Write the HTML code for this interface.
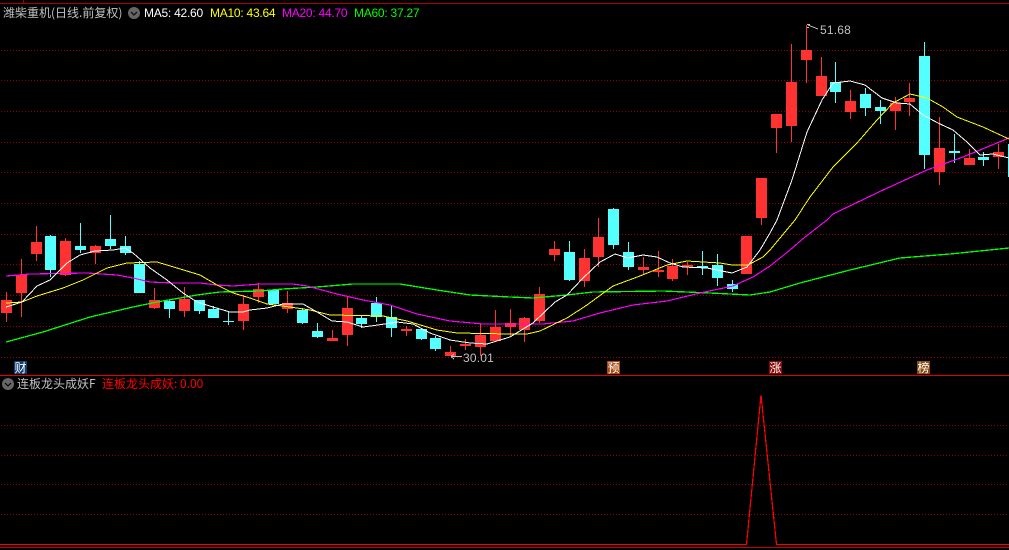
<!DOCTYPE html>
<html lang="zh-CN">
<head>
<meta charset="utf-8">
<title>潍柴重机</title>
<style>
html,body{margin:0;padding:0;background:#000;width:1009px;height:550px;overflow:hidden}
#w{position:relative;width:1009px;height:550px;background:#000;overflow:hidden}
svg{position:absolute;left:0;top:0}
.t{position:absolute;white-space:nowrap;font:12px/14px "WenQuanYi Zen Hei","Noto Sans CJK SC",sans-serif}
.l{position:absolute;white-space:nowrap;font:12px/14px "Liberation Sans",sans-serif;letter-spacing:-.25px}
.n{letter-spacing:.2px}
.m{position:absolute;width:13px;height:13px;top:361px;color:#fff;text-align:center;font:12px/13px "WenQuanYi Zen Hei","Noto Sans CJK SC",sans-serif}
</style>
</head>
<body>
<div id="w">
<svg width="1009" height="550" viewBox="0 0 1009 550" shape-rendering="crispEdges" fill="none">
<g stroke="#960000" stroke-width="1" stroke-dasharray="1 2">
<path d="M1 50.5H1009M1 80.5H1009M1 111.5H1009M1 142.5H1009M1 172.5H1009M1 203.5H1009M1 234.5H1009M1 264.5H1009M1 295.5H1009M1 326.5H1009M1 357.5H1009M1 425.5H1009M1 455.5H1009M1 484.5H1009M1 514.5H1009"/>
</g>
<path d="M0 3.5H1009M23.5 0V3" stroke="#a80000"/>
<path d="M0 375.5H1009" stroke="#e00000"/>
<path d="M0 547.5H1009" stroke="#c80000"/>
<path stroke="#ff3232" d="M6.5 292V322M21.5 259V317M36.5 226V261M65.5 238V276M95.5 245V264M154.5 288V309M184.5 287V317M243.5 295V330M258.5 283V303M287.5 291V313M332.5 330V341M347.5 296V346M406.5 326V336M450.5 346V356M465.5 339V350M480.5 323V356M495.5 310V341M510.5 309V337M524.5 317V342M539.5 287V323M554.5 241V261M584.5 249V287M598.5 218V267M643.5 257V274M658.5 251V277M672.5 259V281M687.5 262V275M746.5 236V274M761.5 178V225M776.5 114V153M791.5 44V142M806.5 25V83M821.5 57V96M850.5 90V119M895.5 97V130M909.5 83V116M939.5 117V185M969.5 149V165M998.5 144V169"/>
<path fill="#ff3232" d="M1 300h11v13h-11zM16 275h11v18h-11zM31 242h11v12h-11zM60 241h11v34h-11zM90 246h11v7h-11zM149 300h11v8h-11zM179 299h11v12h-11zM238 304h11v17h-11zM253 289h11v8h-11zM282 303h11v6h-11zM327 338h11v3h-11zM342 308h11v27h-11zM401 329h11v2h-11zM445 352h11v4h-11zM460 344h11v2h-11zM475 335h11v12h-11zM490 327h11v14h-11zM505 323h11v4h-11zM519 318h11v12h-11zM534 294h11v27h-11zM549 249h11v6h-11zM579 258h11v23h-11zM593 237h11v20h-11zM638 267h11v3h-11zM653 270h11v2h-11zM667 266h11v13h-11zM682 265h11v2h-11zM741 236h11v38h-11zM756 178h11v40h-11zM771 114h11v14h-11zM786 82h11v44h-11zM801 50h11v10h-11zM816 76h11v20h-11zM845 101h11v11h-11zM890 103h11v8h-11zM904 98h11v4h-11zM934 148h11v24h-11zM964 158h11v7h-11zM993 152h11v5h-11z"/>
<path stroke="#54ffff" d="M50.5 235V277M80.5 223V253M110.5 215V249M125.5 236V255M139.5 261V293M169.5 300V318M199.5 300V314M213.5 306V318M228.5 312V325M273.5 290V304M302.5 308V324M317.5 323V338M361.5 316V328M376.5 297V322M391.5 305V337M421.5 328V340M435.5 336V351M569.5 241V281M613.5 208V249M628.5 242V270M702.5 251V275M717.5 254V286M732.5 280V292M835.5 62V103M865.5 88V116M880.5 100V124M924.5 42V169M954.5 134V163M983.5 152V166"/>
<path fill="#54ffff" d="M45 236h11v34h-11zM75 246h11v4h-11zM105 239h11v7h-11zM120 246h11v7h-11zM134 264h11v29h-11zM164 301h11v8h-11zM194 300h11v11h-11zM208 309h11v9h-11zM223 321h11v1h-11zM268 290h11v14h-11zM297 310h11v13h-11zM312 331h11v6h-11zM356 318h11v6h-11zM371 303h11v14h-11zM386 317h11v11h-11zM416 329h11v10h-11zM430 338h11v11h-11zM564 252h11v28h-11zM608 209h11v36h-11zM623 252h11v15h-11zM697 266h11v2h-11zM712 265h11v13h-11zM727 284h11v5h-11zM830 82h11v10h-11zM860 94h11v14h-11zM875 107h11v4h-11zM919 56h11v99h-11zM949 151h11v2h-11zM978 157h11v3h-11zM1008 144h1v33h-1z"/>
<g stroke-width="1">
<polyline stroke="#00ff00" stroke-width="1.3" points="6,342 43,332 90,317 133,307 157,302 197,295 220,292 260,291 283,289 317,287 353,284 400,284 437,290 470,295 510,297 533,298 567,295 593,292 663,291 710,293 750,295 770,292 800,283 850,270 900,258 950,254 1009,248"/>
<polyline stroke="#ff00ff" stroke-width="1.15" points="6,276 30,274 87,273 117,275 133,278 150,282 173,283 200,283 217,285 233,286 260,284 293,284 307,286 337,294 363,300 390,305 417,314 450,321 483,324 510,324 543,324 573,321 600,313 633,305 667,301 700,293 733,286 753,277 770,266 790,250 805,237 827,220 833,214 883,190 927,170 963,157 1009,138"/>
<polyline stroke="#ffff00" points="6,303 22,302 37,296 63,288 83,280 107,268 127,263 157,262 177,268 200,275 217,285 233,293 250,298 267,304 290,307 310,310 330,315 383,316 407,321 437,330 457,333 510,334 527,334 540,331 567,318 587,305 613,286 640,276 667,265 687,261 720,263 732,265 748,265 763,257 770,250 795,220 810,197 833,167 857,143 877,120 893,103 910,94 927,98 943,107 957,117 983,127 1009,139"/>
<polyline stroke="#ffffff" points="6,307 22,302 37,286 50,280 67,263 80,255 95,251 113,250 125,248 133,253 150,268 167,280 183,293 197,302 213,307 230,312 243,312 250,310 267,308 283,304 303,304 317,312 332,321 347,322 363,327 378,325 397,322 413,324 430,333 450,340 470,343 487,344 510,337 533,323 555,302 567,295 583,278 600,262 615,254 628,258 643,255 657,257 670,263 683,267 707,268 732,273 747,267 760,250 770,233 777,220 792,180 807,132 822,100 833,83 850,81 865,85 882,98 897,103 910,104 923,115 938,123 953,130 967,142 980,155 993,154 1009,158"/>
</g>
<path stroke="#c0c0c0" d="M808 25L818 29M807 24.500H810M807 27.500H809M451 356.500H462M451 356.500L454 354M451 356.500L454 359"/>
<path stroke="#ff0000" stroke-width="1.2" d="M0 544.500H746.500L761 395L776.500 544.500H1009"/>
<circle cx="134" cy="13" r="6" fill="#666" shape-rendering="auto"/>
<path d="M131 12l3 3 3-3" stroke="#111" stroke-width="1.300" shape-rendering="auto"/>
<circle cx="8" cy="384" r="6" fill="#666" shape-rendering="auto"/>
<path d="M5 383l3 3 3-3" stroke="#111" stroke-width="1.300" shape-rendering="auto"/>
</svg>
<div class="t" style="left:3px;top:6px;color:#c0c0c0">潍柴重机(日线.前复权)</div>
<div class="l" style="left:144px;top:6px;color:#fff">MA5: 42.60</div>
<div class="l" style="left:210px;top:6px;color:#ff0">MA10: 43.64</div>
<div class="l" style="left:282px;top:6px;color:#f0f">MA20: 44.70</div>
<div class="l" style="left:354px;top:6px;color:#0f0">MA60: 37.27</div>
<div class="l n" style="left:820px;top:23px;color:#c0c0c0">51.68</div>
<div class="l n" style="left:463px;top:351px;color:#c0c0c0">30.01</div>
<div class="t" style="left:17px;top:377px;color:#c0c0c0">连板龙头成妖F</div>
<div class="t" style="left:102px;top:377px;color:#f00">连板龙头成妖: 0.00</div>
<div class="m" style="left:14px;background:#0f3f70">财</div>
<div class="m" style="left:607px;background:#a84a14">预</div>
<div class="m" style="left:769px;background:#8a0a0a">涨</div>
<div class="m" style="left:917px;background:#8a4a10">榜</div>
</div>
</body>
</html>
